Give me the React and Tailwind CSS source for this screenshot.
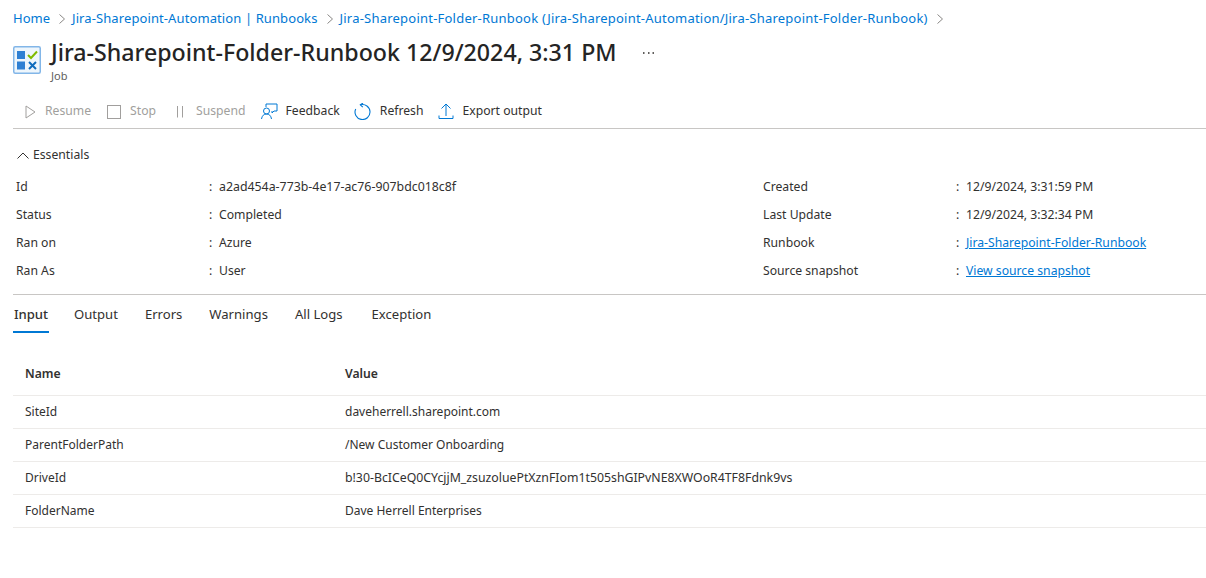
import React from "react";

function Chevron() {
  return (
    <svg width="8" height="12" viewBox="0 0 8 12" fill="none" stroke="#8a8886" strokeWidth="1" className="shrink-0">
      <path d="M1.5 1.500 L6.500 6 L1.500 10.500" />
    </svg>
  );
}

function JobIcon() {
  return (
    <svg width="28" height="28" viewBox="0 0 28 28" className="shrink-0">
      <rect x="0.75" y="0.75" width="26.5" height="26.5" rx="1.5" fill="#eef6fc" stroke="#82b6e8" strokeWidth="1.5" />
      <rect x="4" y="5" width="8" height="8" fill="#2f80d3" />
      <rect x="4" y="15.5" width="8" height="8" fill="#2f80d3" />
      <path d="M15 9 L18 12 L24 5.5" fill="none" stroke="#7fba00" strokeWidth="2" />
      <path d="M16 16 L23 23 M23 16 L16 23" fill="none" stroke="#0f6cbd" strokeWidth="2" />
    </svg>
  );
}

function Row({ label, value, link, wide }) {
  return (
    <div className="flex h-[28px] items-center">
      <div className="w-[193px] shrink-0">{label}</div>
      <span className="w-[10px]">:</span>
      {link ? <a className="text-[#0078d4] underline">{value}</a> : <span className={wide ? "text-[12.35px]" : ""}>{value}</span>}
    </div>
  );
}

const left = [
  ["Id", "a2ad454a-773b-4e17-ac76-907bdc018c8f"],
  ["Status", "Completed"],
  ["Ran on", "Azure"],
  ["Ran As", "User"],
];
const right = [
  ["Created", "12/9/2024, 3:31:59 PM"],
  ["Last Update", "12/9/2024, 3:32:34 PM"],
  ["Runbook", "Jira-Sharepoint-Folder-Runbook", true],
  ["Source snapshot", "View source snapshot", true],
];
const rows = [
  ["SiteId", "daveherrell.sharepoint.com"],
  ["ParentFolderPath", "/New Customer Onboarding"],
  ["DriveId", "b!30-BcICeQ0CYcjjM_zsuzoluePtXznFIom1t505shGIPvNE8XWOoR4TF8Fdnk9vs"],
  ["FolderName", "Dave Herrell Enterprises"],
];

export default function App() {
  return (
    <div className="h-[578px] w-[1206px] overflow-hidden bg-white pl-[13px] font-['Noto_Sans','Open_Sans',sans-serif] text-[12.2px] text-[#323130]">
      <div className="flex h-[37px] items-center pt-[1px] text-[13px] text-[#0078d4]">
        <span>Home</span>
        <span className="ml-[8px] mr-[6px]"><Chevron /></span>
        <span className="tracking-[0.1px]">Jira-Sharepoint-Automation | Runbooks</span>
        <span className="ml-[8px] mr-[6px]"><Chevron /></span>
        <span className="tracking-[0.22px]">Jira-Sharepoint-Folder-Runbook (Jira-Sharepoint-Automation/Jira-Sharepoint-Folder-Runbook)</span>
        <span className="ml-[8px]"><Chevron /></span>
      </div>
      <div className="flex items-start">
        <div className="pt-[9px]"><JobIcon /></div>
        <div className="ml-[10px]">
          <div className="text-[23.2px] leading-[30px] font-medium text-[#242424]">Jira-Sharepoint-Folder-Runbook 12/9/2024, 3:31 PM</div>
          <div className="mt-[1px] text-[11px] leading-[16px] text-[#605e5c]">Job</div>
        </div>
        <svg width="12" height="3" viewBox="0 0 12 3" fill="#605e5c" className="ml-[26px] mt-[15px]">
          <rect x="0" y="0" width="1.500" height="2" />
          <rect x="5" y="0" width="1.500" height="2" />
          <rect x="9.500" y="0" width="1.500" height="2" />
        </svg>
      </div>
      <div className="mt-[10px] flex h-[35px] items-center border-b border-[#c8c6c4] pt-[1px] text-[12.2px]">
        <svg width="11" height="14" viewBox="0 0 11 14" fill="none" stroke="#a19f9d" className="ml-[12px]"><path d="M1 1 L10 7 L1 13 Z" /></svg>
        <span className="ml-[9px] text-[#a19f9d]">Resume</span>
        <svg width="14" height="14" viewBox="0 0 14 14" fill="none" stroke="#a19f9d" className="ml-[16px]"><rect x="0.500" y="0.500" width="13" height="13" /></svg>
        <span className="ml-[9px] text-[#a19f9d]">Stop</span>
        <svg width="8" height="14" viewBox="0 0 8 14" fill="none" stroke="#a19f9d" className="ml-[20px]"><path d="M1.500 1 V12.500 M6.500 1 V12.500" /></svg>
        <span className="ml-[12px] text-[#a19f9d]">Suspend</span>
        <svg width="17" height="17" viewBox="0 0 17 17" fill="none" stroke="#0078d4" className="ml-[15px]"><path d="M5 4 V1 H16 V8 H13 L11 10 V8" /><circle cx="5.500" cy="8" r="3" /><path d="M0.500 16 C1 12.500 3 11 5.500 11 C8 11 10 12.500 10.500 16" /></svg>
        <span className="ml-[8px]">Feedback</span>
        <svg width="18" height="17" viewBox="0 0 18 17" fill="none" stroke="#0078d4" strokeWidth="1.100" className="ml-[14px]"><path d="M1.700 5.900 A7.500 7.500 0 1 0 6.500 1.800" /><path d="M9 0 L6.300 1.800 L8.800 4.200" /></svg>
        <span className="ml-[8px]">Refresh</span>
        <svg width="16" height="17" viewBox="0 0 16 17" fill="none" stroke="#0078d4" className="ml-[15px]"><path d="M8 13 V1 M3.500 5.500 L8 1 L12.500 5.500 M1 12.500 V15.500 H15 V12.500" /></svg>
        <span className="ml-[8px]">Export output</span>
      </div>
      <div className="flex h-[40px] items-center gap-[4px] pl-[4px] pt-[13px]">
        <svg width="12" height="7" viewBox="0 0 12 7" fill="none" stroke="#323130"><path d="M0.500 6.500 L6 1 L11.500 6.500" /></svg>
        <span>Essentials</span>
      </div>
      <div className="mt-[4px] flex h-[122px] border-b border-[#c8c6c4] pl-[3px]">
        <div className="w-[747px]">
          {left.map((r) => <Row key={r[0]} label={r[0]} value={r[1]} wide={r[0] === "Id"} />)}
        </div>
        <div>
          {right.map((r) => <Row key={r[0]} label={r[0]} value={r[1]} link={r[2]} />)}
        </div>
      </div>
      <div className="mt-[1px] flex h-[37px] items-start gap-[27px] text-[13.1px]">
        <div className="-mr-[2px] flex h-[37px] w-[36px] justify-center border-b-2 border-[#0078d4] pt-[9px] font-medium"><span>Input</span></div>
        <span className="pt-[9px]">Output</span>
        <span className="pt-[9px]">Errors</span>
        <span className="pt-[9px]">Warnings</span>
        <span className="pt-[9px]">All Logs</span>
        <span className="ml-[2px] pt-[9px]">Exception</span>
      </div>
      <div className="mt-[25px]">
        <div className="flex h-[38px] items-start border-b border-[#edebe9] pl-[12px] pt-[7px] font-semibold">
          <div className="w-[320px]">Name</div>
          <div>Value</div>
        </div>
        {rows.map((r) => (
          <div key={r[0]} className="flex h-[33px] items-center border-b border-[#edebe9] pl-[12px]">
            <div className="w-[320px] text-[12px]">{r[0]}</div>
            <div className={r[0] === "DriveId" ? "text-[12.3px]" : "text-[12px]"}>{r[1]}</div>
          </div>
        ))}
      </div>
    </div>
  );
}
